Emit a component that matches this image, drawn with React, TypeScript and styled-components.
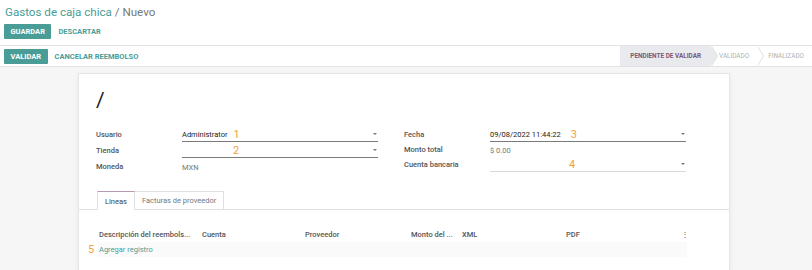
import React from 'react';
import styled, { createGlobalStyle } from 'styled-components';

const GlobalStyle = createGlobalStyle`
  html, body { margin: 0; padding: 0; background: #fff; }
  body { font-family: Roboto, 'Liberation Sans', sans-serif; color: #4c4c4c; }
`;

const teal = '#4a9d96';
const orange = '#f2a13d';

const Page = styled.div`
  width: 812px;
  height: 270px;
  overflow: hidden;
  display: flex;
  flex-direction: column;
`;

const ControlPanel = styled.div`
  padding: 0 4px;
  height: 45px;
  display: flex;
  flex-direction: column;
`;

const Breadcrumb = styled.div`
  height: 24px;
  display: flex;
  align-items: center;
  font-size: 11.6px;
  padding-left: 1px;
  color: #777;
  span { color: ${teal}; }
`;

const Buttons = styled.div`
  display: flex;
  align-items: center;
  gap: 7px;
`;

const Button = styled.button<{ $primary?: boolean }>`
  font-family: Roboto, 'Liberation Sans', sans-serif;
  font-size: 7.5px;
  font-weight: 700;
  text-transform: uppercase;
  border: none;
  border-radius: 1px;
  height: 15px;
  padding: ${p => (p.$primary ? '0 6.5px' : '0')};
  background: ${p => (p.$primary ? teal : 'transparent')};
  color: ${p => (p.$primary ? '#fff' : teal)};
`;

const StatusBar = styled.div`
  height: 20px;
  border-top: 1px solid #e2e2e2;
  border-bottom: 1px solid #e2e2e2;
  display: flex;
  align-items: center;
  justify-content: space-between;
  padding-left: 4px;
`;

const Stages = styled.div`
  display: flex;
  height: 100%;
  align-items: stretch;
`;

const Stage = styled.div<{ $active?: boolean; $padLeft: number }>`
  position: relative;
  display: flex;
  align-items: center;
  font-size: 6.4px;
  font-weight: ${p => (p.$active ? 700 : 400)};
  color: ${p => (p.$active ? '#7b5875' : '#b0b0b0')};
  background: ${p => (p.$active ? '#e9eaed' : 'transparent')};
  padding: 0 ${p => (p.$active ? 10 : 8)}px 0 ${p => p.$padLeft}px;
  text-transform: uppercase;
  &::after {
    content: '';
    position: absolute;
    right: -6px;
    top: 0;
    width: 0;
    height: 0;
    border-top: 10px solid transparent;
    border-bottom: 10px solid transparent;
    border-left: 6px solid ${p => (p.$active ? '#e9eaed' : '#fff')};
    z-index: 2;
  }
  &::before {
    content: '';
    position: absolute;
    right: -7px;
    top: 0;
    width: 0;
    height: 0;
    border-top: 10px solid transparent;
    border-bottom: 10px solid transparent;
    border-left: 6px solid #e2e2e2;
    z-index: 1;
  }
  &:last-child::after, &:last-child::before { display: none; }
`;

const Main = styled.div`
  flex: 1;
  background: #f6f6f6;
  padding: 6px 0 0 78px;
`;

const Sheet = styled.div`
  width: 652px;
  height: 100%;
  background: #fff;
  border: 1px solid #e4e4e4;
  border-bottom: none;
  box-sizing: border-box;
  box-shadow: 0 2px 6px rgba(0, 0, 0, 0.06);
  padding-top: 12px;
`;

const Name = styled.div`
  font-size: 21px;
  color: #222;
  padding-left: 17px;
  height: 30px;
  line-height: 29px;
`;

const Groups = styled.div`
  display: grid;
  grid-template-columns: 282px 282px;
  column-gap: 26px;
  padding: 11px 0 0 17px;
`;

const Group = styled.div`
  display: flex;
  flex-direction: column;
`;

const Row = styled.div<{ $h?: number }>`
  display: grid;
  grid-template-columns: 86px 1fr;
  height: ${p => p.$h ?? 16}px;
  align-items: center;
`;

const Label = styled.div`
  font-size: 7.5px;
  line-height: 10px;
  font-weight: 500;
  color: #555;
`;

const Field = styled.div<{ $underline?: boolean }>`
  position: relative;
  height: 13px;
  display: flex;
  align-items: center;
  font-size: 7.5px;
  color: ${p => (p.$underline ? '#222' : '#777')};
  border-bottom: ${p => (p.$underline ? '1px solid #7a7a7a' : 'none')};
  &.light { border-bottom-color: #d8d8d8; }
`;

const Caret = styled.span`
  position: absolute;
  right: 1px;
  top: 5px;
  width: 0;
  height: 0;
  border-left: 2px solid transparent;
  border-right: 2px solid transparent;
  border-top: 2px solid #777;
`;

const Num = styled.span<{ $left?: number }>`
  color: ${orange};
  font-size: 11px;
  line-height: 13px;
  margin-left: ${p => p.$left ?? 6}px;
`;

const Tabs = styled.div`
  margin-top: 16px;
  border-bottom: 1px solid #e0e0e0;
  display: flex;
  padding-left: 18px;
  height: 18px;
`;

const Tab = styled.div<{ $active?: boolean }>`
  font-size: 7.5px;
  color: ${p => (p.$active ? '#444' : '#777')};
  padding: 0 7px;
  display: flex;
  align-items: center;
  border: 1px solid #e0e0e0;
  border-top-color: ${p => (p.$active ? '#b89ab0' : '#e0e0e0')};
  border-bottom: none;
  background: #fff;
  margin-bottom: ${p => (p.$active ? '-1px' : '0')};
  & + & { border-left: none; }
`;

const Table = styled.div`
  margin: 16px 0 0 19px;
  width: 589px;
`;

const HeadRow = styled.div`
  display: grid;
  grid-template-columns: 103px 103px 106px 51px 104px 115px 1fr;
  height: 16px;
  align-items: center;
  font-size: 7.5px;
  font-weight: 500;
  color: #555;
  padding-left: 1px;
`;

const AddRow = styled.div`
  position: relative;
  height: 15px;
  background: #fafafa;
  display: flex;
  align-items: center;
  font-size: 7.5px;
  color: ${teal};
  padding-left: 1px;
`;

const RowNum = styled.span`
  position: absolute;
  left: -10px;
  top: 0;
  line-height: 15px;
  color: ${orange};
  font-size: 11px;
`;

export default function App() {
  return (
    <Page>
      <GlobalStyle />
      <ControlPanel>
        <Breadcrumb>
          <span>Gastos de caja chica</span>&nbsp;/ Nuevo
        </Breadcrumb>
        <Buttons>
          <Button $primary>Guardar</Button>
          <Button>Descartar</Button>
        </Buttons>
      </ControlPanel>
      <StatusBar>
        <Buttons>
          <Button $primary>Validar</Button>
          <Button>Cancelar reembolso</Button>
        </Buttons>
        <Stages>
          <Stage $active $padLeft={10}>Pendiente de validar</Stage>
          <Stage $padLeft={8}>Validado</Stage>
          <Stage $padLeft={11}>Finalizado</Stage>
        </Stages>
      </StatusBar>
      <Main>
        <Sheet>
          <Name>/</Name>
          <Groups>
            <Group>
              <Row>
                <Label>Usuario</Label>
                <Field $underline>
                  Administrator<Num>1</Num>
                  <Caret />
                </Field>
              </Row>
              <Row>
                <Label>Tienda</Label>
                <Field $underline>
                  <Num $left={51}>2</Num>
                  <Caret />
                </Field>
              </Row>
              <Row>
                <Label>Moneda</Label>
                <Field>MXN</Field>
              </Row>
            </Group>
            <Group>
              <Row>
                <Label>Fecha</Label>
                <Field $underline>
                  09/08/2022 11:44:22<Num $left={10}>3</Num>
                  <Caret />
                </Field>
              </Row>
              <Row $h={14}>
                <Label>Monto total</Label>
                <Field>$ 0.00</Field>
              </Row>
              <Row $h={15}>
                <Label>Cuenta bancaria</Label>
                <Field $underline className="light">
                  <Num $left={79}>4</Num>
                  <Caret />
                </Field>
              </Row>
            </Group>
          </Groups>
          <Tabs>
            <Tab $active>Lineas</Tab>
            <Tab>Facturas de proveedor</Tab>
          </Tabs>
          <Table>
            <HeadRow>
              <span>Descripción del reembols...</span>
              <span>Cuenta</span>
              <span>Proveedor</span>
              <span>Monto del ...</span>
              <span>XML</span>
              <span>PDF</span>
              <span>⋮</span>
            </HeadRow>
            <AddRow>
              <RowNum>5</RowNum>
              Agregar registro
            </AddRow>
          </Table>
        </Sheet>
      </Main>
    </Page>
  );
}
